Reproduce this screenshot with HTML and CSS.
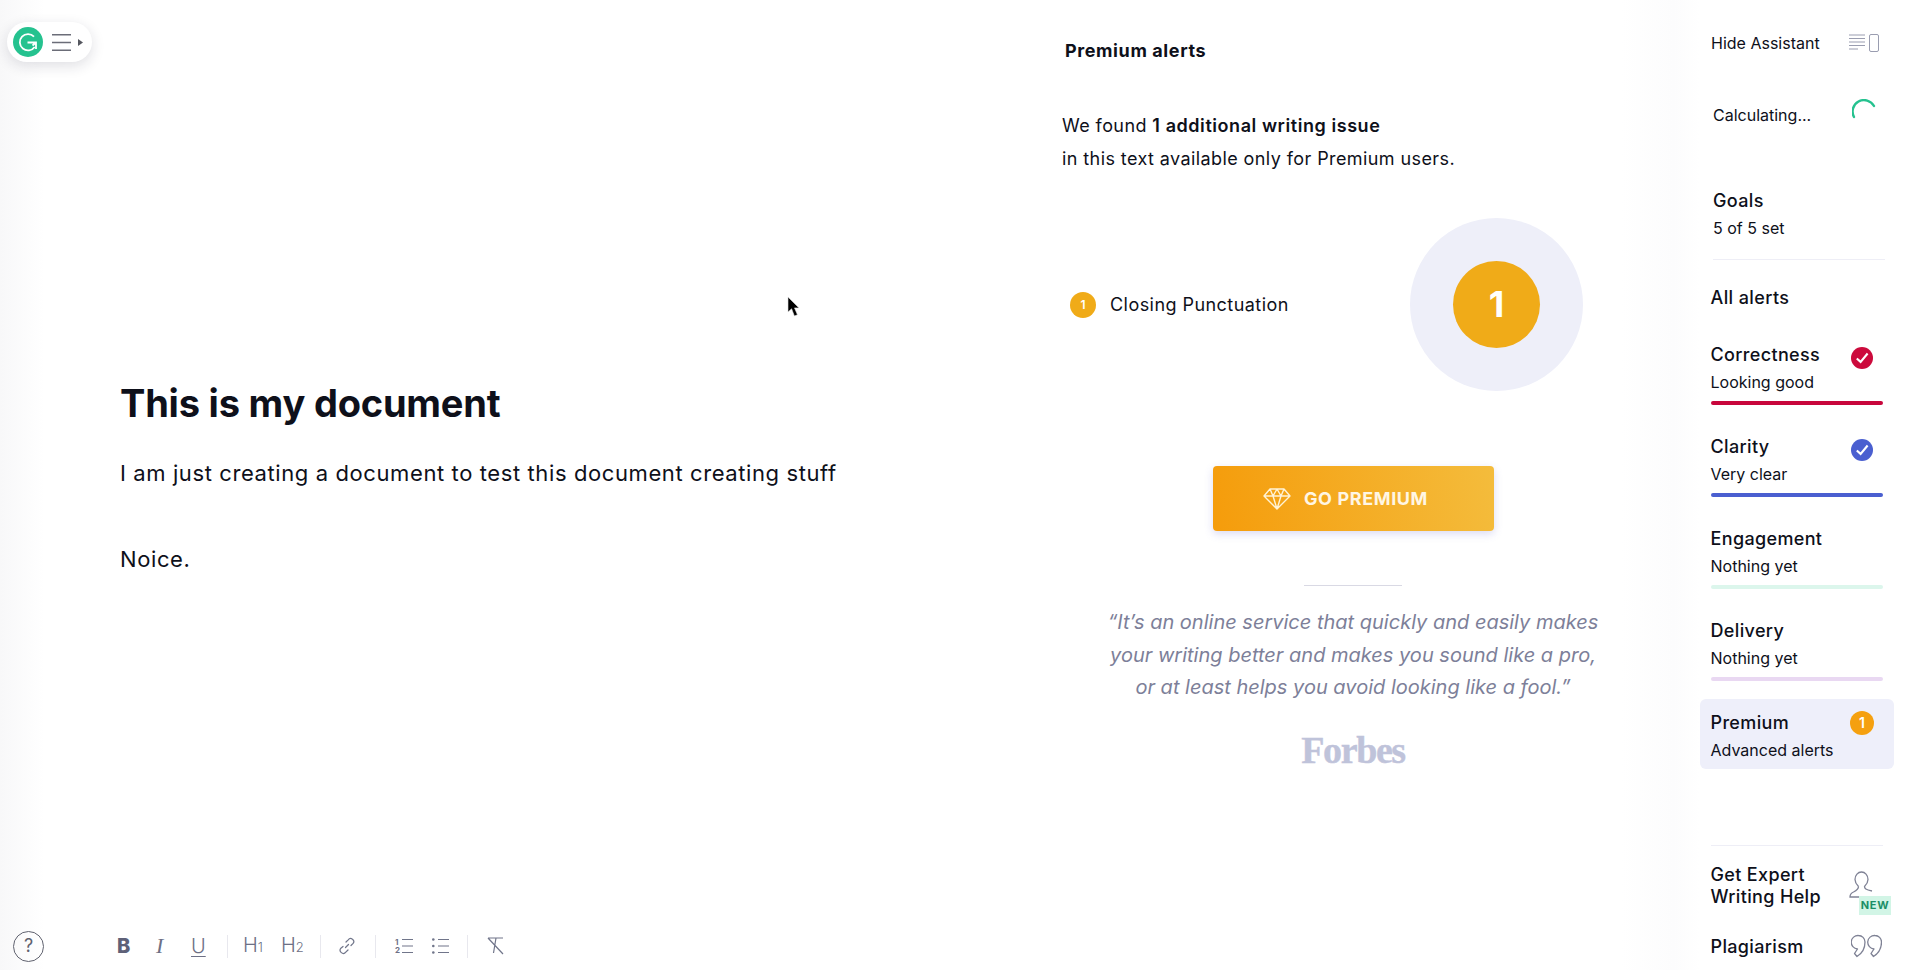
FILE: index.html
```html
<!DOCTYPE html>
<html lang="en">
<head>
<meta charset="utf-8">
<title>Grammarly document</title>
<link rel="stylesheet" href="styles.css">
</head>
<body>
<div class="app">
  <section class="editor">
    <div class="widget">
      <svg class="g-logo" viewBox="0 0 30 30"><circle cx="15" cy="15" r="15" fill="#25c28f"/><path d="M21 9.600A8.200 8.200 0 1 0 21.700 20" fill="none" stroke="#fff" stroke-width="1.800"/><path d="M14.500 15.500H23v6.500M23 15.500l-3.500 3" fill="none" stroke="#fff" stroke-width="1.800"/></svg>
      <svg class="g-menu" viewBox="0 0 19 17"><path d="M0 .75h19M0 8.500h19M0 16.250h19" stroke="#6b6d78" stroke-width="1.300"/></svg>
      <svg class="g-caret" viewBox="0 0 5 7"><path d="M0 0l5 3.500L0 7z" fill="#55575f"/></svg>
    </div>
    <svg class="cursor" viewBox="0 0 13 21"><path d="M1 1v15l3.600-3.200L7.400 20l3-1.300-2.900-6.800H12z" fill="#000" stroke="#ddd" stroke-width=".6"/></svg>
    <div class="doc">
      <h1 class="doc-title">This is my document</h1>
      <p class="doc-line">I am just creating a document to test this document creating stuff</p>
      <p class="doc-line doc-gap">Noice.</p>
    </div>
    <div class="toolbar">
      <span class="help">?</span>
      <span class="tool tool-b">B</span>
      <span class="tool tool-i">I</span>
      <span class="tool tool-u">U</span>
      <i class="sep sep-a"></i>
      <span class="tool tool-h">H<small>1</small></span>
      <span class="tool tool-h tool-h2">H<small>2</small></span>
      <i class="sep sep-b"></i>
      <svg class="ico ico-link" viewBox="0 0 18 18"><path d="M7.500 10.500l3-3M8 5l2.200-2.200a3 3 0 0 1 4.900 3.600L13 8.500M10 13l-2.200 2.200a3 3 0 0 1-4.900-4L5 9.500" fill="none" stroke="#70758a" stroke-width="1.200" stroke-linecap="round"/></svg>
      <i class="sep sep-c"></i>
      <span class="ico ico-ol"><b class="nums">1<br>2</b><svg viewBox="0 0 11 16"><path d="M0 1.500h11M0 8h11M0 14.500h11" stroke="#70758a" stroke-width="1.200"/></svg></span>
      <svg class="ico ico-ul" viewBox="0 0 17 16"><path d="M6 1.500h11M6 8h11M6 14.500h11" stroke="#70758a" stroke-width="1.200"/><circle cx="1.300" cy="1.500" r="1.300" fill="#70758a"/><circle cx="1.300" cy="8" r="1.300" fill="#70758a"/><circle cx="1.300" cy="14.500" r="1.300" fill="#70758a"/></svg>
      <i class="sep sep-d"></i>
      <svg class="ico ico-clear" viewBox="0 0 17 18"><path d="M1 1h15M9 1L6.500 16M1 1l15 16" fill="none" stroke="#70758a" stroke-width="1.200"/></svg>
    </div>
  </section>

  <section class="panel">
    <h2 class="panel-title">Premium alerts</h2>
    <p class="panel-intro">We found <strong>1 additional writing issue</strong><br>in this text available only for Premium users.</p>
    <div class="issue-row">
      <div class="issue"><span class="issue-badge">1</span><span class="issue-name">Closing Punctuation</span></div>
      <div class="ring"><span class="ring-core">1</span></div>
    </div>
    <a class="cta">
      <svg class="cta-ico" viewBox="0 0 28 22"><path d="M7 1h14l6 7-13 13L1 8zM1 8h26M7 1l3 7 4 13 4-13 3-7M10 8l4-7 4 7" fill="none" stroke="#fff3d6" stroke-width="1.400" stroke-linejoin="round"/></svg>
      <span>GO PREMIUM</span>
    </a>
    <div class="rule"></div>
    <blockquote class="quote">“It’s an online service that quickly and easily makes<br>your writing better and makes you sound like a pro,<br>or at least helps you avoid looking like a fool.”</blockquote>
    <div class="forbes">Forbes</div>
  </section>

  <aside class="side">
    <div class="hide-row">
      <span>Hide Assistant</span>
      <svg class="hide-ico" viewBox="0 0 30 18"><path d="M0 1h16M0 4.500h16M0 8h16M0 11.500h16M0 15h9" stroke="#9a9db0" stroke-width="1"/><rect x="20.500" y=".5" width="9" height="17" rx="1.500" fill="none" stroke="#9a9db0"/></svg>
    </div>
    <div class="score-row">
      <span>Calculating...</span>
      <svg class="spinner" viewBox="0 0 24 20"><path d="M2 18A10.500 10.500 0 0 1 22 7" fill="none" stroke="#25c28f" stroke-width="2.400" stroke-linecap="round"/></svg>
    </div>
    <div class="goals">
      <div class="name">Goals</div>
      <div class="sub">5 of 5 set</div>
    </div>
    <div class="all">All alerts</div>
    <div class="alert">
      <div class="name">Correctness</div><div class="sub">Looking good</div><i class="bar bar-red"></i>
      <svg class="status" viewBox="0 0 22 22"><circle cx="11" cy="11" r="11" fill="#cc0a3c"/><path d="M5.800 11.500l3.800 3.400 7-8.400" fill="none" stroke="#fff" stroke-width="2.100"/></svg>
    </div>
    <div class="alert">
      <div class="name">Clarity</div><div class="sub">Very clear</div><i class="bar bar-blue"></i>
      <svg class="status" viewBox="0 0 22 22"><circle cx="11" cy="11" r="11" fill="#4a5fd0"/><path d="M5.800 11.500l3.800 3.400 7-8.400" fill="none" stroke="#fff" stroke-width="2.100"/></svg>
    </div>
    <div class="alert">
      <div class="name">Engagement</div><div class="sub">Nothing yet</div><i class="bar bar-green"></i>
    </div>
    <div class="alert">
      <div class="name">Delivery</div><div class="sub">Nothing yet</div><i class="bar bar-purple"></i>
    </div>
    <div class="alert alert-active">
      <div class="name">Premium</div><div class="sub">Advanced alerts</div>
      <span class="count">1</span>
    </div>
    <div class="extras">
      <div class="extra expert">
        <span class="name">Get Expert<br>Writing Help</span>
        <svg class="person" viewBox="0 0 24 27"><path d="M9.500 15.500c-2-2-3.500-4-3.500-7C6 4 9 1 12.500 1S19 4 19 8.500c0 3-1.500 5-3.500 7 0 2 1 3 7.500 4.500M9.500 15.500c0 3-2 4-5 5.500C2 22 1 23.500 1 26h9" fill="none" stroke="#7f8295" stroke-width="1.300"/></svg>
        <span class="new">NEW</span>
      </div>
      <div class="extra plag">
        <span class="name">Plagiarism</span>
        <svg class="quotes" viewBox="0 0 31 23"><path d="M7.500 1a6.500 6.500 0 0 1 6.500 6.500c0 6-3 11.500-8 14.500l-2.500-3 3-4.500A6.500 6.500 0 0 1 7.500 1zM24 1a6.500 6.500 0 0 1 6.500 6.500c0 6-3 11.500-8 14.500L20 19l3-4.500A6.500 6.500 0 0 1 24 1z" fill="none" stroke="#7f8295" stroke-width="1.300" stroke-linejoin="round"/></svg>
      </div>
    </div>
  </aside>
</div>
</body>
</html>
```
FILE: styles.css
```css
* { box-sizing: border-box; }
html, body { margin: 0; height: 100%; }
body {
  font-family: Inter, "Noto Sans", sans-serif;
  color: #0e101a;
  background: linear-gradient(90deg, #f8f8f9 0, #fff 44px) #fff;
  overflow: hidden;
}
.app { display: flex; height: 970px; }

/* editor */
.editor { position: relative; width: 1040px; display: flex; flex-direction: column; }
.widget {
  position: absolute; left: 7px; top: 22px; width: 85px; height: 40px;
  border-radius: 20px; background: #fff;
  box-shadow: 0 4px 14px rgba(30, 30, 60, .14);
  display: flex; align-items: center; padding-left: 6px;
}
.g-logo { width: 30px; height: 30px; }
.g-menu { width: 19px; height: 17px; margin-left: 9px; }
.g-caret { width: 5px; height: 7px; margin-left: 7px; }
.cursor { position: absolute; left: 787px; top: 296px; width: 13px; height: 21px; }
.doc { padding: 379px 0 0 120px; flex: 1; }
.doc-title { margin: 0; font-size: 38px; line-height: 48px; font-weight: 700; letter-spacing: -.2px; }
.doc-line { margin: 30px 0 0; font-size: 22px; line-height: 32px; font-weight: 400; letter-spacing: .6px; }
.doc-gap { margin-top: 54px; }
.toolbar { height: 44px; display: flex; align-items: center; padding: 0 0 4px 13px; color: #6d7085; }
.help {
  width: 31px; height: 31px; border: 1.3px solid #60626f; border-radius: 50%;
  font-size: 18px; line-height: 28px; text-align: center; color: #60626f;
}
.tool { font-size: 20px; line-height: 24px; flex: none; }
.tool-b { margin-left: 73px; width: 14px; font-weight: 800; color: #5e6178; }
.tool-i { margin-left: 25px; width: 14px; font-style: italic; font-weight: 300; font-family: "Liberation Serif", serif; font-size: 22px; }
.tool-u { margin-left: 21px; width: 17px; font-weight: 300; text-decoration: underline; text-underline-offset: 3px; text-decoration-thickness: 1.3px; }
.tool-h { font-weight: 300; width: 21px; margin-left: 15px; }
.tool-h2 { margin-left: 17px; }
.tool-h small { font-size: 13px; }
.sep { width: 1px; height: 23px; background: #e8e8ee; flex: none; }
.sep-a { margin-left: 19px; }
.sep-b { margin-left: 18px; }
.sep-c { margin-left: 19px; }
.sep-d { margin-left: 18px; }
.ico { flex: none; display: block; }
.ico-link { width: 18px; height: 18px; margin-left: 17px; }
.ico-ol { width: 18px; height: 16px; margin-left: 19px; display: flex; justify-content: space-between; }
.ico-ol svg { width: 11px; height: 16px; }
.nums { font-size: 8px; line-height: 8px; font-weight: 700; }
.ico-ul { width: 17px; height: 16px; margin-left: 19px; }
.ico-clear { width: 17px; height: 18px; margin-left: 19px; }

/* premium panel */
.panel {
  width: 660px; padding: 39px 56px 0 22px;
  background: linear-gradient(90deg, transparent 88%, #fcfcfd 96%, #fff);
}
.panel-title { margin: 0 0 0 3px; font-size: 18px; line-height: 24px; font-weight: 700; letter-spacing: .6px; }
.panel-intro { margin: 47px 0 0; font-size: 18px; line-height: 32.5px; letter-spacing: .41px; }
.panel-intro strong { font-weight: 600; letter-spacing: .56px; }
.issue-row { display: flex; justify-content: space-between; align-items: center; margin-top: 43px; padding: 0 61px 0 8px; }
.issue { display: flex; align-items: center; }
.issue-badge {
  width: 26px; height: 26px; border-radius: 50%; background: #f0ab18; color: #fff;
  font-size: 12px; font-weight: 600; line-height: 26px; text-align: center;
}
.issue-name { margin-left: 14px; font-size: 18px; line-height: 24px; letter-spacing: .45px; }
.ring { width: 173px; height: 173px; border-radius: 50%; background: #eeeff9; display: flex; align-items: center; justify-content: center; }
.ring-core {
  width: 87px; height: 87px; border-radius: 50%; background: #f0ab18; color: #fff;
  font-size: 36px; font-weight: 700; line-height: 87px; text-align: center;
}
.cta {
  display: flex; align-items: center; justify-content: center; gap: 13px;
  width: 281px; height: 65px; margin: 75px auto 0; padding-right: 15px; border-radius: 4px;
  background: linear-gradient(80deg, #f59c0b, #f4bc3c);
  box-shadow: 0 3px 8px rgba(90, 90, 200, .22);
  color: #fff6e4; font-size: 18px; font-weight: 700; letter-spacing: .62px;
}
.cta-ico { width: 28px; height: 22px; }
.rule { width: 98px; height: 1px; margin: 54px auto 0; background: #d9d9e4; }
.quote {
  margin: 20px 0 0; font-size: 20px; line-height: 32.67px; font-style: italic;
  text-align: center; color: #7d7f99;
}
.forbes {
  margin-top: 24px; text-align: center; font-family: "Liberation Serif", serif; font-weight: 700;
  font-size: 38px; line-height: 44px; letter-spacing: -1.4px; color: #bfc3da;
  -webkit-text-stroke: .4px #bfc3da;
}

/* sidebar */
.side { width: 220px; padding-top: 31px; }
.name { font-size: 18px; line-height: 24px; font-weight: 500; letter-spacing: .35px; }
.sub { font-size: 16px; line-height: 24px; margin-top: 3px; }
.hide-row { display: flex; align-items: center; justify-content: space-between; height: 24px; padding: 0 41px 0 11px; font-size: 16px; }
.hide-ico { width: 30px; height: 18px; }
.score-row { display: flex; align-items: center; justify-content: space-between; height: 24px; margin-top: 48px; padding: 0 44px 0 13px; font-size: 16px; }
.spinner { width: 24px; height: 20px; margin-top: -12px; }
.goals { margin: 62px 35px 0 13px; padding-bottom: 19px; border-bottom: 1px solid #eeeef6; }
.all { margin: 26px 0 0 10.5px; font-size: 18px; line-height: 24px; font-weight: 500; letter-spacing: .4px; }
.alert { position: relative; width: 194px; height: 92px; padding: 11.5px 11px 0; border-radius: 6px; }
.alert .name, .alert .sub { margin-left: -.5px; }
.all + .alert { margin-top: 21px; }
.bar { display: block; height: 4px; border-radius: 2px; margin-top: 7.5px; }
.bar-red { background: #c8063c; }
.bar-blue { background: #4a5fd0; }
.bar-green { background: #dcf6ec; }
.bar-purple { background: #e9d8f2; }
.status { position: absolute; right: 21px; top: 16px; width: 22px; height: 22px; }
.alert-active { height: 70px; background: #eeeffa; }
.count {
  position: absolute; right: 20px; top: 12px; width: 24px; height: 24px; border-radius: 50%;
  background: #f5a00f; color: #fff; font-size: 14px; font-weight: 600; line-height: 24px; text-align: center;
}
.extras { margin: 76px 0 0 11px; width: 172px; border-top: 1px solid #eeeef6; padding-top: 18px; }
.extra { position: relative; }
.extra .name { margin-left: -.5px; }
.expert .name { display: block; line-height: 22px; }
.person { position: absolute; left: 138px; top: 7px; width: 24px; height: 27px; }
.new {
  position: absolute; left: 148px; top: 32px; width: 32px; height: 19px; background: #d2f5e6;
  color: #1b8f66; font-size: 11px; font-weight: 700; letter-spacing: .6px; line-height: 19px; text-align: center;
}
.plag { margin-top: 27px; line-height: 24px; }
.plag .name { display: block; }
.quotes { position: absolute; left: 140px; top: -1px; width: 31px; height: 24px; }
```
